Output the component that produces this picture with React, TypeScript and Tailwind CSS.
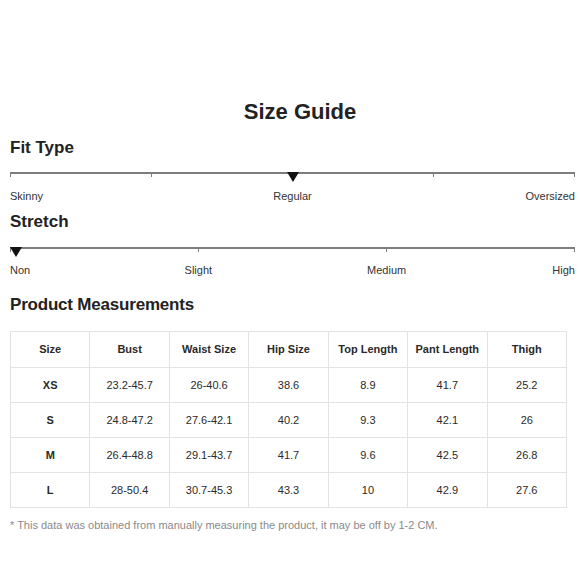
const rows = [
  ["XS", "23.2-45.7", "26-40.6", "38.6", "8.9", "41.7", "25.2"],
  ["S", "24.8-47.2", "27.6-42.1", "40.2", "9.3", "42.1", "26"],
  ["M", "26.4-48.8", "29.1-43.7", "41.7", "9.6", "42.5", "26.8"],
  ["L", "28-50.4", "30.7-45.3", "43.3", "10", "42.9", "27.6"],
];

const headers = ["Size", "Bust", "Waist Size", "Hip Size", "Top Length", "Pant Length", "Thigh"];

const Arrow = () => (
  <div className="w-0 h-0 border-l-[6px] border-r-[6px] border-t-[10px] border-l-transparent border-r-transparent border-t-[#111]" />
);

// a line split in segments, the segment edges are the ticks
const Track = ({ segments }: { segments: number }) => (
  <div className="flex">
    {Array.from({ length: segments }).map((_, i) => (
      <div
        key={i}
        className={
          "flex-1 h-[5px] border-t-2 border-l border-[#7d7d7d] " + (i === segments - 1 ? "border-r" : "")
        }
      />
    ))}
  </div>
);

const App = () => {
  return (
    <div className="w-[580px] h-[580px] bg-white pl-[10px] pr-[5px] pt-[99px] text-[#333] font-['Liberation_Sans',Arial,sans-serif]">
      <h1 className="text-center text-[22px] leading-[26px] font-bold text-[#222] pl-[15px]">Size Guide</h1>

      {/* fit type */}
      <h2 className="mt-[13px] text-[17px] leading-[20px] font-bold text-[#222]">Fit Type</h2>
      <div className="relative mt-[14px]">
        <Track segments={4} />
        <div className="absolute top-0 left-1/2 -translate-x-1/2">
          <Arrow />
        </div>
      </div>
      <div className="grid grid-cols-3 mt-[12px] text-[11px] leading-[14px]">
        <span className="text-left">Skinny</span>
        <span className="text-center">Regular</span>
        <span className="text-right">Oversized</span>
      </div>

      {/* stretch */}
      <h2 className="mt-[9px] text-[17px] leading-[20px] font-bold text-[#222]">Stretch</h2>
      <div className="relative mt-[15px]">
        <Track segments={3} />
        <div className="absolute top-0 left-0">
          <Arrow />
        </div>
      </div>
      <div className="grid grid-cols-6 mt-[11px] text-[11px] leading-[14px]">
        <span className="text-left">Non</span>
        <span className="col-span-2 text-center">Slight</span>
        <span className="col-span-2 text-center">Medium</span>
        <span className="text-right">High</span>
      </div>

      <h2 className="mt-[18px] text-[17px] leading-[20px] font-bold text-[#222] tracking-[-0.2px]">Product Measurements</h2>
      <table className="mt-[16px] w-[557px] table-fixed border-collapse text-[11px] text-[#2a2a2a]">
        <thead>
          <tr className="h-[36px]">
            {headers.map((h) => (
              <th key={h} className="border border-[#e3e3e3] font-bold text-center align-middle">{h}</th>
            ))}
          </tr>
        </thead>
        <tbody>
          {rows.map((r) => (
            <tr key={r[0]} className="h-[35px]">
              {r.map((c, i) => (
                <td key={i} className={"border border-[#e3e3e3] text-center align-middle " + (i === 0 ? "font-bold" : "")}>{c}</td>
              ))}
            </tr>
          ))}
        </tbody>
      </table>
      <p className="mt-[10px] text-[11px] leading-[14px] text-[#8a8a8a]">
        * This data was obtained from manually measuring the product, it may be off by 1-2 CM.
      </p>
    </div>
  );
};

export default App;
